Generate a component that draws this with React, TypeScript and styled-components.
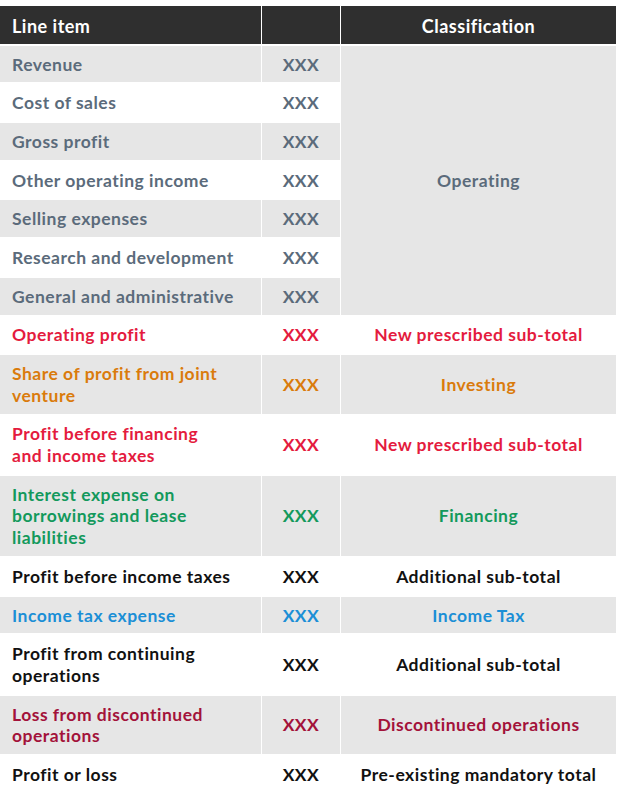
import React from "react";
import styled, { createGlobalStyle } from "styled-components";

const GlobalStyle = createGlobalStyle`
  html, body { margin: 0; padding: 0; background: #ffffff; }
  body { font-family: "Lato", "Liberation Sans", sans-serif; }
`;

type Tone = "slate" | "red" | "orange" | "green" | "black" | "blue" | "maroon";

const toneColor: Record<Tone, string> = {
  slate: "#5b6b7b",
  red: "#e41b3e",
  orange: "#da7b0c",
  green: "#13995c",
  black: "#111111",
  blue: "#1b8fd6",
  maroon: "#a3123a",
};

const Page = styled.div`
  padding-top: 6px;
  width: 616px;
`;

const Table = styled.table`
  width: 616px;
  border-collapse: separate;
  border-spacing: 0;
  table-layout: fixed;
  font-size: 17.5px;
  letter-spacing: 0.5px;
  line-height: 21.7px;
  font-weight: 700;
`;

const HeadCell = styled.th<{ $align: "left" | "center"; $last?: boolean }>`
  background: #2f2f2f;
  color: #ffffff;
  text-align: ${(p) => p.$align};
  padding: 10px 12px 6px;
  height: 38px;
  box-sizing: border-box;
  border-bottom: 2px solid #ffffff;
  border-right: ${(p) => (p.$last ? "none" : "1px solid #ffffff")};
  font-weight: 700;
  font-size: 18px;
  letter-spacing: 0.5px;
`;

const Row = styled.tr<{ $shaded: boolean }>`
  background: ${(p) => (p.$shaded ? "#e6e6e6" : "#ffffff")};
`;

const Cell = styled.td<{ $tone: Tone; $align: "left" | "center"; $last?: boolean; $bg?: string }>`
  color: ${(p) => toneColor[p.$tone]};
  text-align: ${(p) => p.$align};
  padding: 7.8px 12px 7.2px;
  vertical-align: middle;
  border-bottom: 2px solid #ffffff;
  border-right: ${(p) => (p.$last ? "none" : "1px solid #ffffff")};
  white-space: nowrap;
  ${(p) => (p.$bg ? `background: ${p.$bg};` : "")}
`;

type Item = {
  lines: string[];
  tone: Tone;
  cls?: string;
};

const items: Item[] = [
  { lines: ["Revenue"], tone: "slate" },
  { lines: ["Cost of sales"], tone: "slate" },
  { lines: ["Gross profit"], tone: "slate" },
  { lines: ["Other operating income"], tone: "slate" },
  { lines: ["Selling expenses"], tone: "slate" },
  { lines: ["Research and development"], tone: "slate" },
  { lines: ["General and administrative"], tone: "slate" },
  { lines: ["Operating profit"], tone: "red", cls: "New prescribed sub-total" },
  { lines: ["Share of profit from joint", "venture"], tone: "orange", cls: "Investing" },
  { lines: ["Profit before financing", "and income taxes"], tone: "red", cls: "New prescribed sub-total" },
  { lines: ["Interest expense on", "borrowings and lease", "liabilities"], tone: "green", cls: "Financing" },
  { lines: ["Profit before income taxes"], tone: "black", cls: "Additional sub-total" },
  { lines: ["Income tax expense"], tone: "blue", cls: "Income Tax" },
  { lines: ["Profit from continuing", "operations"], tone: "black", cls: "Additional sub-total" },
  { lines: ["Loss from discontinued", "operations"], tone: "maroon", cls: "Discontinued operations" },
  { lines: ["Profit or loss"], tone: "black", cls: "Pre-existing mandatory total" },
];

export default function App() {
  return (
    <Page>
      <GlobalStyle />
      <Table>
        <colgroup>
          <col style={{ width: 262 }} />
          <col style={{ width: 79 }} />
          <col style={{ width: 275 }} />
        </colgroup>
        <thead>
          <tr>
            <HeadCell $align="left">Line item</HeadCell>
            <HeadCell $align="center"></HeadCell>
            <HeadCell $align="center" $last>
              Classification
            </HeadCell>
          </tr>
        </thead>
        <tbody>
          {items.map((it, i) => (
            <Row key={i} $shaded={i % 2 === 0}>
              <Cell $tone={it.tone} $align="left">
                {it.lines.map((l, j) => (
                  <React.Fragment key={j}>
                    {j > 0 && <br />}
                    {l}
                  </React.Fragment>
                ))}
              </Cell>
              <Cell $tone={it.tone} $align="center">
                XXX
              </Cell>
              {i === 0 && (
                <Cell $tone="slate" $align="center" $last rowSpan={7} $bg="#e6e6e6">
                  Operating
                </Cell>
              )}
              {it.cls && (
                <Cell $tone={it.tone} $align="center" $last>
                  {it.cls}
                </Cell>
              )}
            </Row>
          ))}
        </tbody>
      </Table>
    </Page>
  );
}
